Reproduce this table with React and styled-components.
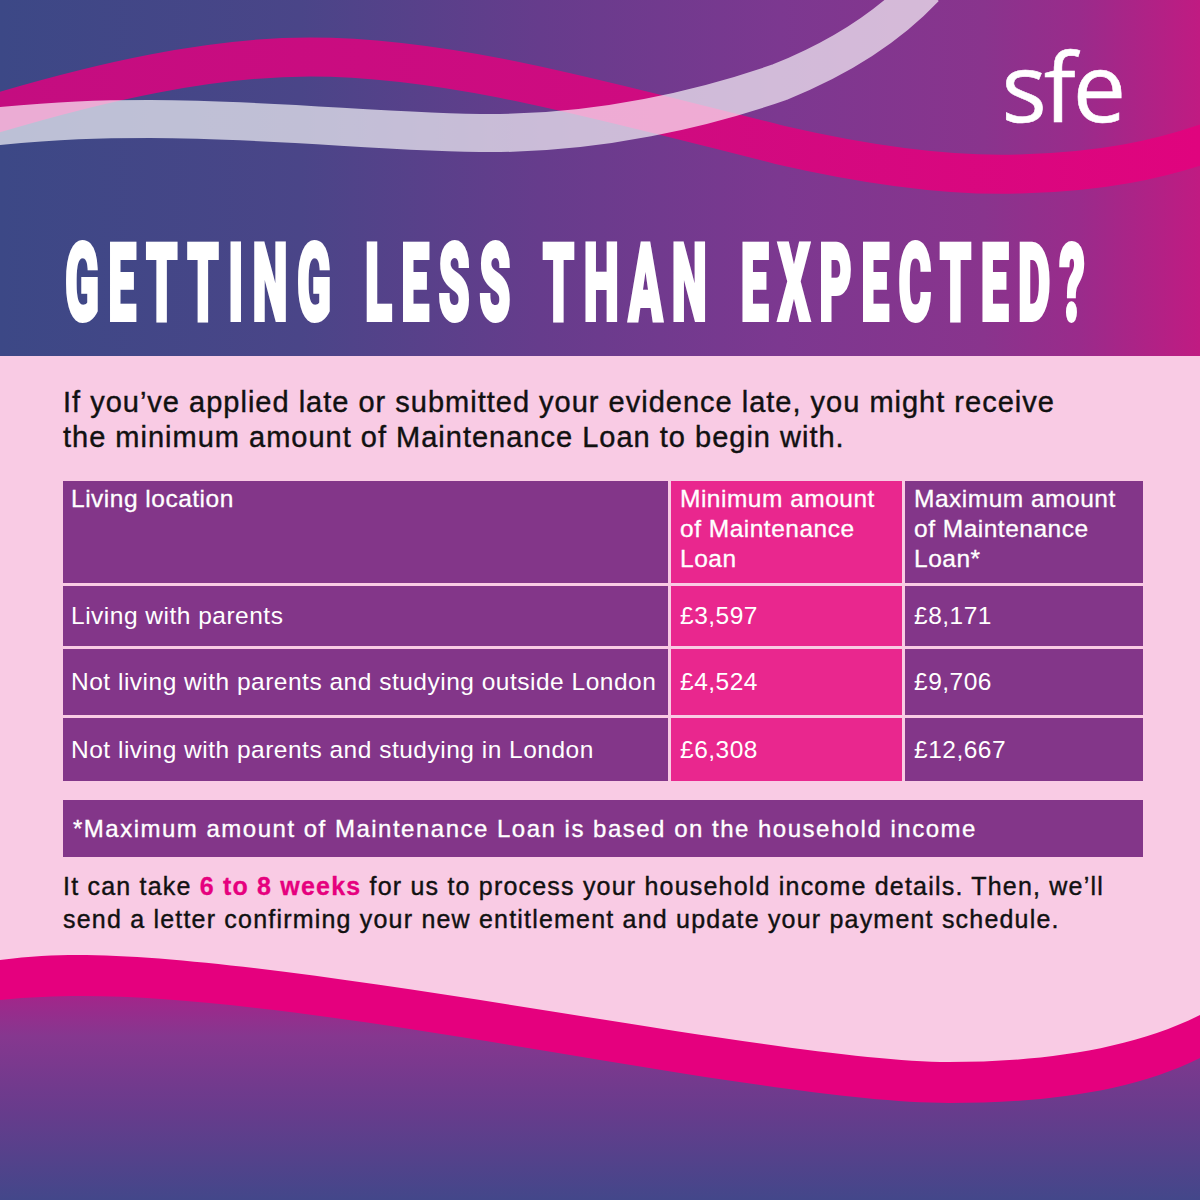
import React, { useLayoutEffect, useRef, useState } from "react";
import styled, { createGlobalStyle } from "styled-components";

const GlobalStyle = createGlobalStyle`
  html, body {
    margin: 0;
    padding: 0;
    background: #f9cbe4;
  }
  * {
    box-sizing: border-box;
  }
`;

const Page = styled.div`
  width: 1200px;
  height: 1200px;
  overflow: hidden;
  background: #f9cbe4;
  display: flex;
  flex-direction: column;
  font-family: "Liberation Sans", Arial, sans-serif;
`;

const Header = styled.header`
  position: relative;
  height: 356px;
  flex-shrink: 0;
  overflow: hidden;
  padding-top: 38px;
  display: flex;
  flex-direction: column;
  background: linear-gradient(
    90deg,
    #3c4886 0%,
    #4a4588 25%,
    #663c8c 45%,
    #7c3890 65%,
    #89348d 82%,
    #9a2b8b 90%,
    #c01b82 100%
  );
`;

const Waves = styled.svg`
  position: absolute;
  left: 0;
  top: 0;
  z-index: 0;
`;

const Logo = styled.div`
  position: relative;
  z-index: 1;
  align-self: flex-end;
  margin-right: 77px;
  font-family: "Open Sans", sans-serif;
  font-size: 95px;
  line-height: 94px;
  letter-spacing: -3px;
  color: #fff;
  -webkit-text-stroke: 0.6px #fff;
`;

const TITLE_WIDTH = 1020;
const TITLE_SPACING = 20;

const TitleText = styled.h1`
  position: relative;
  z-index: 1;
  align-self: flex-start;
  display: inline-block;
  margin: 98px 0 0 65px;
  font-family: Roboto, Inter, sans-serif;
  font-size: 107px;
  line-height: 107px;
  font-weight: 900;
  color: #fff;
  -webkit-text-stroke: 4px #fff;
  letter-spacing: ${TITLE_SPACING}px;
  word-spacing: 6px;
  white-space: nowrap;
  transform-origin: left center;
`;

const Content = styled.main`
  padding: 29px 57px 0 63px;
  display: flex;
  flex-direction: column;
`;

const Intro = styled.p`
  margin: 0;
  font-size: 29px;
  line-height: 35px;
  letter-spacing: 1px;
  color: #111;
  -webkit-text-stroke: 0.4px #111;
  white-space: nowrap;
`;

const Table = styled.div`
  margin-top: 26px;
  display: grid;
  grid-template-columns: 605px 231px 238px;
  grid-template-rows: 102px 60px 66px 63px;
  gap: 3px;
`;

const Cell = styled.div`
  background: ${(p) => (p.$accent ? "#e9278e" : "#833689")};
  color: #fff;
  font-size: 24.5px;
  line-height: 30px;
  letter-spacing: 0.5px;
  padding: ${(p) => (p.$head ? "3px" : "0")} 9px 0
    ${(p) => (p.$first ? "8px" : "9px")};
  display: flex;
  align-items: ${(p) => (p.$head ? "flex-start" : "center")};
  -webkit-text-stroke: ${(p) => (p.$head ? "0.3px #fff" : "0")};
`;

const Note = styled.div`
  margin-top: 19px;
  height: 57px;
  background: #833689;
  color: #fff;
  font-size: 24px;
  letter-spacing: 1.5px;
  padding-left: 10px;
  display: flex;
  align-items: center;
  -webkit-text-stroke: 0.35px #fff;
`;

const Outro = styled.p`
  margin: 13px 0 0;
  font-size: 25px;
  line-height: 33px;
  letter-spacing: 1.2px;
  color: #111;
  -webkit-text-stroke: 0.4px #111;
  white-space: nowrap;
`;

const Highlight = styled.strong`
  color: #e6007e;
  font-weight: 700;
  -webkit-text-stroke: 0.3px #e6007e;
`;

const Footer = styled.footer`
  margin-top: auto;
  height: 245px;
  flex-shrink: 0;

  svg {
    display: block;
  }
`;

const rows = [
  ["Living with parents", "£3,597", "£8,171"],
  ["Not living with parents and studying outside London", "£4,524", "£9,706"],
  ["Not living with parents and studying in London", "£6,308", "£12,667"],
];

function Title({ children }) {
  const ref = useRef(null);
  const [scale, setScale] = useState(0.45);

  useLayoutEffect(() => {
    const measure = () => {
      const el = ref.current;
      if (!el) return;
      const w = el.offsetWidth - TITLE_SPACING;
      if (w > 0) setScale(TITLE_WIDTH / w);
    };
    measure();
    if (document.fonts && document.fonts.ready) {
      document.fonts.ready.then(measure);
    }
  }, []);

  return (
    <TitleText ref={ref} style={{ transform: `scaleX(${scale})` }}>
      {children}
    </TitleText>
  );
}

function HeaderWaves() {
  return (
    <Waves width="1200" height="356" viewBox="0 0 1200 356">
      <defs>
        <linearGradient id="magBand" x1="0" y1="0" x2="1200" y2="0" gradientUnits="userSpaceOnUse">
          <stop offset="0" stopColor="#c40d80" />
          <stop offset="0.55" stopColor="#cf0b80" />
          <stop offset="1" stopColor="#e0047e" />
        </linearGradient>
      </defs>
      <path
        d="M-10,115 C100,82 210,57 310,57 C450,57 600,100 780,145 C880,168 960,176 1020,174 C1100,172 1160,160 1215,140"
        fill="none"
        stroke="url(#magBand)"
        strokeWidth="39"
      />
      <path
        d="M-10,127 C60,120 100,119 150,119 C280,119 400,134 500,133 C600,132 700,110 780,82 C840,58 890,25 925,-12"
        fill="none"
        stroke="#ffffff"
        strokeOpacity="0.66"
        strokeWidth="38"
      />
    </Waves>
  );
}

function FooterWave() {
  return (
    <svg width="1200" height="245" viewBox="0 0 1200 245">
      <defs>
        <linearGradient id="footFill" x1="0" y1="0" x2="0" y2="245" gradientUnits="userSpaceOnUse">
          <stop offset="0.17" stopColor="#a2268a" />
          <stop offset="0.33" stopColor="#86378f" />
          <stop offset="0.65" stopColor="#663c8c" />
          <stop offset="1" stopColor="#43478a" />
        </linearGradient>
      </defs>
      <path
        d="M0,5 C30,1 55,0 77,0 C300,0 780,107 949,107 C1040,107 1130,95 1200,60 L1200,245 L0,245 Z"
        fill="#e5007e"
      />
      <path
        d="M0,45 C30,42 55,41 82,41 C330,41 760,148 949,148 C1040,148 1130,138 1200,103 L1200,245 L0,245 Z"
        fill="url(#footFill)"
      />
    </svg>
  );
}

export default function App() {
  return (
    <>
      <GlobalStyle />
      <Page>
        <Header>
          <HeaderWaves />
          <Logo>sfe</Logo>
          <Title>GETTING LESS THAN EXPECTED?</Title>
        </Header>
        <Content>
          <Intro>
            If you’ve applied late or submitted your evidence late, you might receive
            <br />
            the minimum amount of Maintenance Loan to begin with.
          </Intro>
          <Table>
            <Cell $head $first>Living location</Cell>
            <Cell $head $accent>
              <span>
                Minimum amount
                <br />
                of Maintenance
                <br />
                Loan
              </span>
            </Cell>
            <Cell $head>
              <span>
                Maximum amount
                <br />
                of Maintenance
                <br />
                Loan*
              </span>
            </Cell>
            {rows.map(([where, min, max]) => (
              <React.Fragment key={where}>
                <Cell $first>{where}</Cell>
                <Cell $accent>{min}</Cell>
                <Cell>{max}</Cell>
              </React.Fragment>
            ))}
          </Table>
          <Note>*Maximum amount of Maintenance Loan is based on the household income</Note>
          <Outro>
            It can take <Highlight>6 to 8 weeks</Highlight> for us to process your household
            income details. Then, we’ll
            <br />
            send a letter confirming your new entitlement and update your payment schedule.
          </Outro>
        </Content>
        <Footer>
          <FooterWave />
        </Footer>
      </Page>
    </>
  );
}
